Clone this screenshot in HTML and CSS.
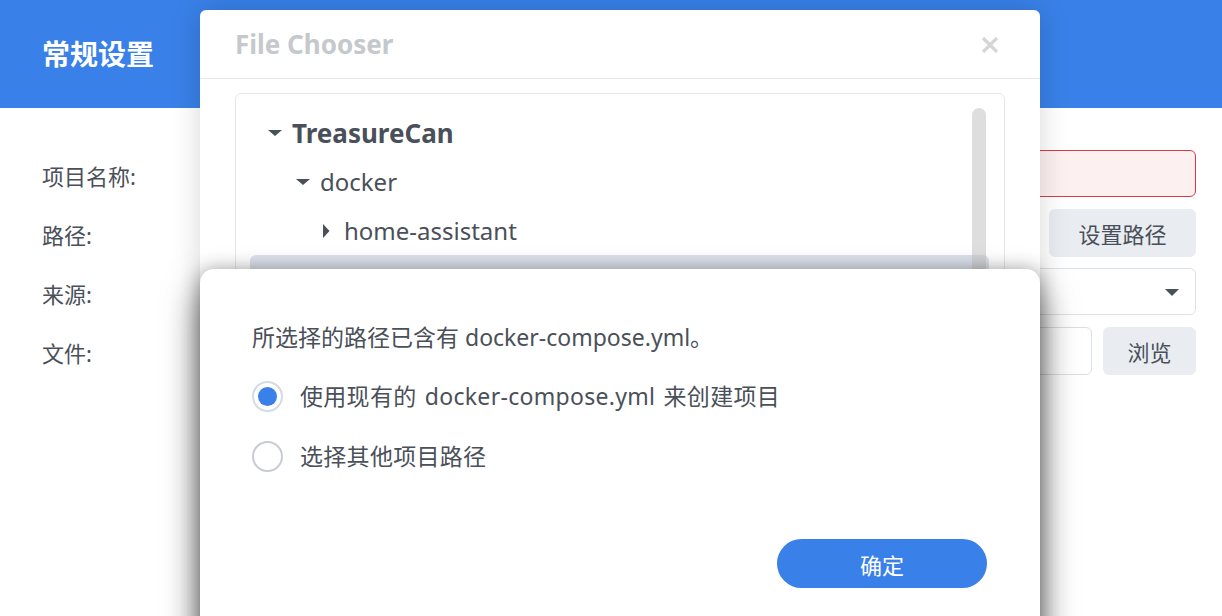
FILE: index.html
```html
<!DOCTYPE html>
<html lang="zh-CN">
<head>
<meta charset="utf-8">
<title>常规设置</title>
<link rel="stylesheet" href="styles.css">
</head>
<body>
<div class="page">
  <header class="page-header">
    <h1 class="page-title">常规设置</h1>
  </header>
  <form class="form">
    <div class="form-row">
      <span class="form-label">项目名称:</span>
      <div class="form-ctrl"><input class="input input-error" type="text"></div>
    </div>
    <div class="form-row">
      <span class="form-label">路径:</span>
      <div class="form-ctrl"><input class="input" type="text"><button type="button" class="btn-light btn-path">设置路径</button></div>
    </div>
    <div class="form-row">
      <span class="form-label">来源:</span>
      <div class="form-ctrl"><div class="select"><span class="select-caret"></span></div></div>
    </div>
    <div class="form-row">
      <span class="form-label">文件:</span>
      <div class="form-ctrl"><input class="input" type="text"><button type="button" class="btn-light btn-browse">浏览</button></div>
    </div>
  </form>
</div>

<div class="dialog chooser">
  <div class="chooser-head">
    <span class="chooser-title">File Chooser</span>
    <svg class="chooser-close" width="18" height="18" viewBox="0 0 18 18"><path d="M2 2 L16 16 M16 2 L2 16" stroke="#d6d6d6" stroke-width="3.2" stroke-linecap="butt"/></svg>
  </div>
  <div class="chooser-body">
    <div class="tree">
      <div class="tree-row lvl1 bold">
        <svg class="caret" width="14" height="14" viewBox="0 0 14 14"><path d="M0 4 L14 4 L7 10 Z" fill="#4a5059"/></svg>
        <span>TreasureCan</span>
      </div>
      <div class="tree-row lvl2">
        <svg class="caret" width="14" height="14" viewBox="0 0 14 14"><path d="M0 4 L14 4 L7 10 Z" fill="#4a5059"/></svg>
        <span>docker</span>
      </div>
      <div class="tree-row lvl3">
        <svg class="caret caret-r" width="11" height="14" viewBox="0 0 11 14"><path d="M0 0 L6.5 7 L0 14 Z" fill="#4a5059"/></svg>
        <span>home-assistant</span>
      </div>
      <div class="tree-row lvl3 selected"></div>
      <div class="scrollbar"></div>
    </div>
  </div>
</div>

<div class="dialog confirm">
  <p class="confirm-msg">所选择的路径已含有 docker-compose.yml。</p>
  <div class="radios">
    <label class="radio-row"><span class="radio checked"><span class="radio-dot"></span></span><span class="radio-text">使用现有的 docker-compose.yml 来创建项目</span></label>
    <label class="radio-row"><span class="radio"></span><span class="radio-text">选择其他项目路径</span></label>
  </div>
  <div class="confirm-foot">
    <button type="button" class="btn-primary">确定</button>
  </div>
</div>
</body>
</html>
```

FILE: styles.css
```css
* { box-sizing: border-box; }
html, body {
  margin: 0;
  padding: 0;
  width: 1222px;
  height: 616px;
  overflow: hidden;
  background: #ffffff;
  font-family: "Noto Sans", "Noto Sans CJK SC", sans-serif;
  color: #4a5059;
}
.page { width: 1222px; }
.page-header {
  height: 108px;
  background: #3980e8;
  display: flex;
  align-items: center;
  padding-left: 42px;
}
.page-title {
  margin: 0;
  font-size: 28px;
  font-weight: 700;
  color: #ffffff;
  line-height: 1;
}
.form {
  padding: 42px 26px 0 42px;
  display: flex;
  flex-direction: column;
  gap: 12px;
}
.form-row {
  display: grid;
  grid-template-columns: 158px 1fr;
  align-items: center;
  height: 47px;
}
.form-label {
  font-size: 22px;
  line-height: 30px;
  padding-top: 4px;
  color: #4a5059;
}
.form-ctrl {
  display: flex;
  gap: 11px;
  height: 100%;
}
.input {
  flex: 1;
  height: 100%;
  border: 1px solid #d9dfe6;
  border-radius: 6px;
  background: #fff;
  font: inherit;
}
.input-error {
  border-color: #e0393e;
  background: #fcf0f0;
}
.btn-light {
  border: none;
  border-radius: 6px;
  background: #e9edf2;
  font-family: inherit;
  font-size: 22px;
  color: #4a5059;
  height: 48px;
  padding: 0;
}
.btn-path { width: 147px; }
.btn-browse { width: 93px; }
.select {
  flex: 1;
  height: 100%;
  border: 1px solid #dde2e8;
  border-radius: 6px;
  display: flex;
  align-items: center;
  justify-content: flex-end;
  padding-right: 16px;
}
.select-caret {
  width: 0;
  height: 0;
  border-left: 7px solid transparent;
  border-right: 7px solid transparent;
  border-top: 7px solid #4a5059;
  margin-top: 2px;
}

.dialog {
  position: absolute;
  left: 200px;
  width: 840px;
  background: #ffffff;
}
.chooser {
  top: 10px;
  height: 700px;
  border-radius: 6px;
  box-shadow: 0 0 30px rgba(0, 0, 0, 0.16);
}
.chooser-head {
  height: 69px;
  border-bottom: 1px solid #e4e8ee;
  display: flex;
  align-items: center;
  justify-content: space-between;
  padding: 0 41px 0 35px;
}
.chooser-title {
  font-size: 26px;
  font-weight: 700;
  color: #c5c8cc;
  line-height: 1;
}
.chooser-close { display: block; margin-top: 1px; }
.chooser-body {
  padding: 14px 35px 0 35px;
}
.tree {
  position: relative;
  height: 600px;
  border: 1px solid #e4e7ec;
  border-radius: 6px;
  padding: 14px 15px 0 14px;
}
.tree-row {
  height: 49px;
  display: flex;
  align-items: center;
  gap: 10px;
  font-size: 24px;
  color: #4a5059;
  border-radius: 6px;
}
.tree-row.bold { font-weight: 700; font-size: 26px; }
.lvl1 { padding-left: 18px; }
.lvl2 { padding-left: 46px; }
.lvl3 { padding-left: 73px; }
.caret { display: block; flex: none; }
.selected {
  background: #dde3ec;
}
.scrollbar {
  position: absolute;
  top: 14px;
  right: 18px;
  width: 14px;
  height: 500px;
  border-radius: 7px;
  background: rgba(200, 200, 200, 0.6);
}

.confirm {
  top: 269px;
  height: 420px;
  border-radius: 14px;
  padding: 53px 53px 0 52px;
  box-shadow: 0 20px 36px rgba(0, 0, 0, 0.55), 0 0 18px rgba(0, 0, 0, 0.28);
}
.confirm-msg {
  margin: 0;
  font-size: 23px;
  line-height: 30px;
}
.radios {
  margin-top: 29px;
  display: flex;
  flex-direction: column;
  gap: 30px;
}
.radio-row {
  display: flex;
  align-items: center;
  gap: 17px;
  font-size: 23px;
  line-height: 30px;
  height: 30px;
}
.radio-text {
  word-spacing: 2px;
  letter-spacing: 0.3px;
}
.radio {
  width: 31px;
  height: 31px;
  border-radius: 50%;
  border: 2px solid #c8ccd2;
  display: flex;
  align-items: center;
  justify-content: center;
  flex: none;
}
.radio.checked { border-color: #d3dbe7; }
.radio-dot {
  width: 19px;
  height: 19px;
  border-radius: 50%;
  background: #3a80e9;
}
.confirm-foot {
  margin-top: 68px;
  display: flex;
  justify-content: flex-end;
}
.btn-primary {
  width: 210px;
  height: 49px;
  border: none;
  border-radius: 25px;
  background: #3a80e9;
  color: #ffffff;
  font-family: inherit;
  font-size: 22px;
  padding: 0;
}
```
